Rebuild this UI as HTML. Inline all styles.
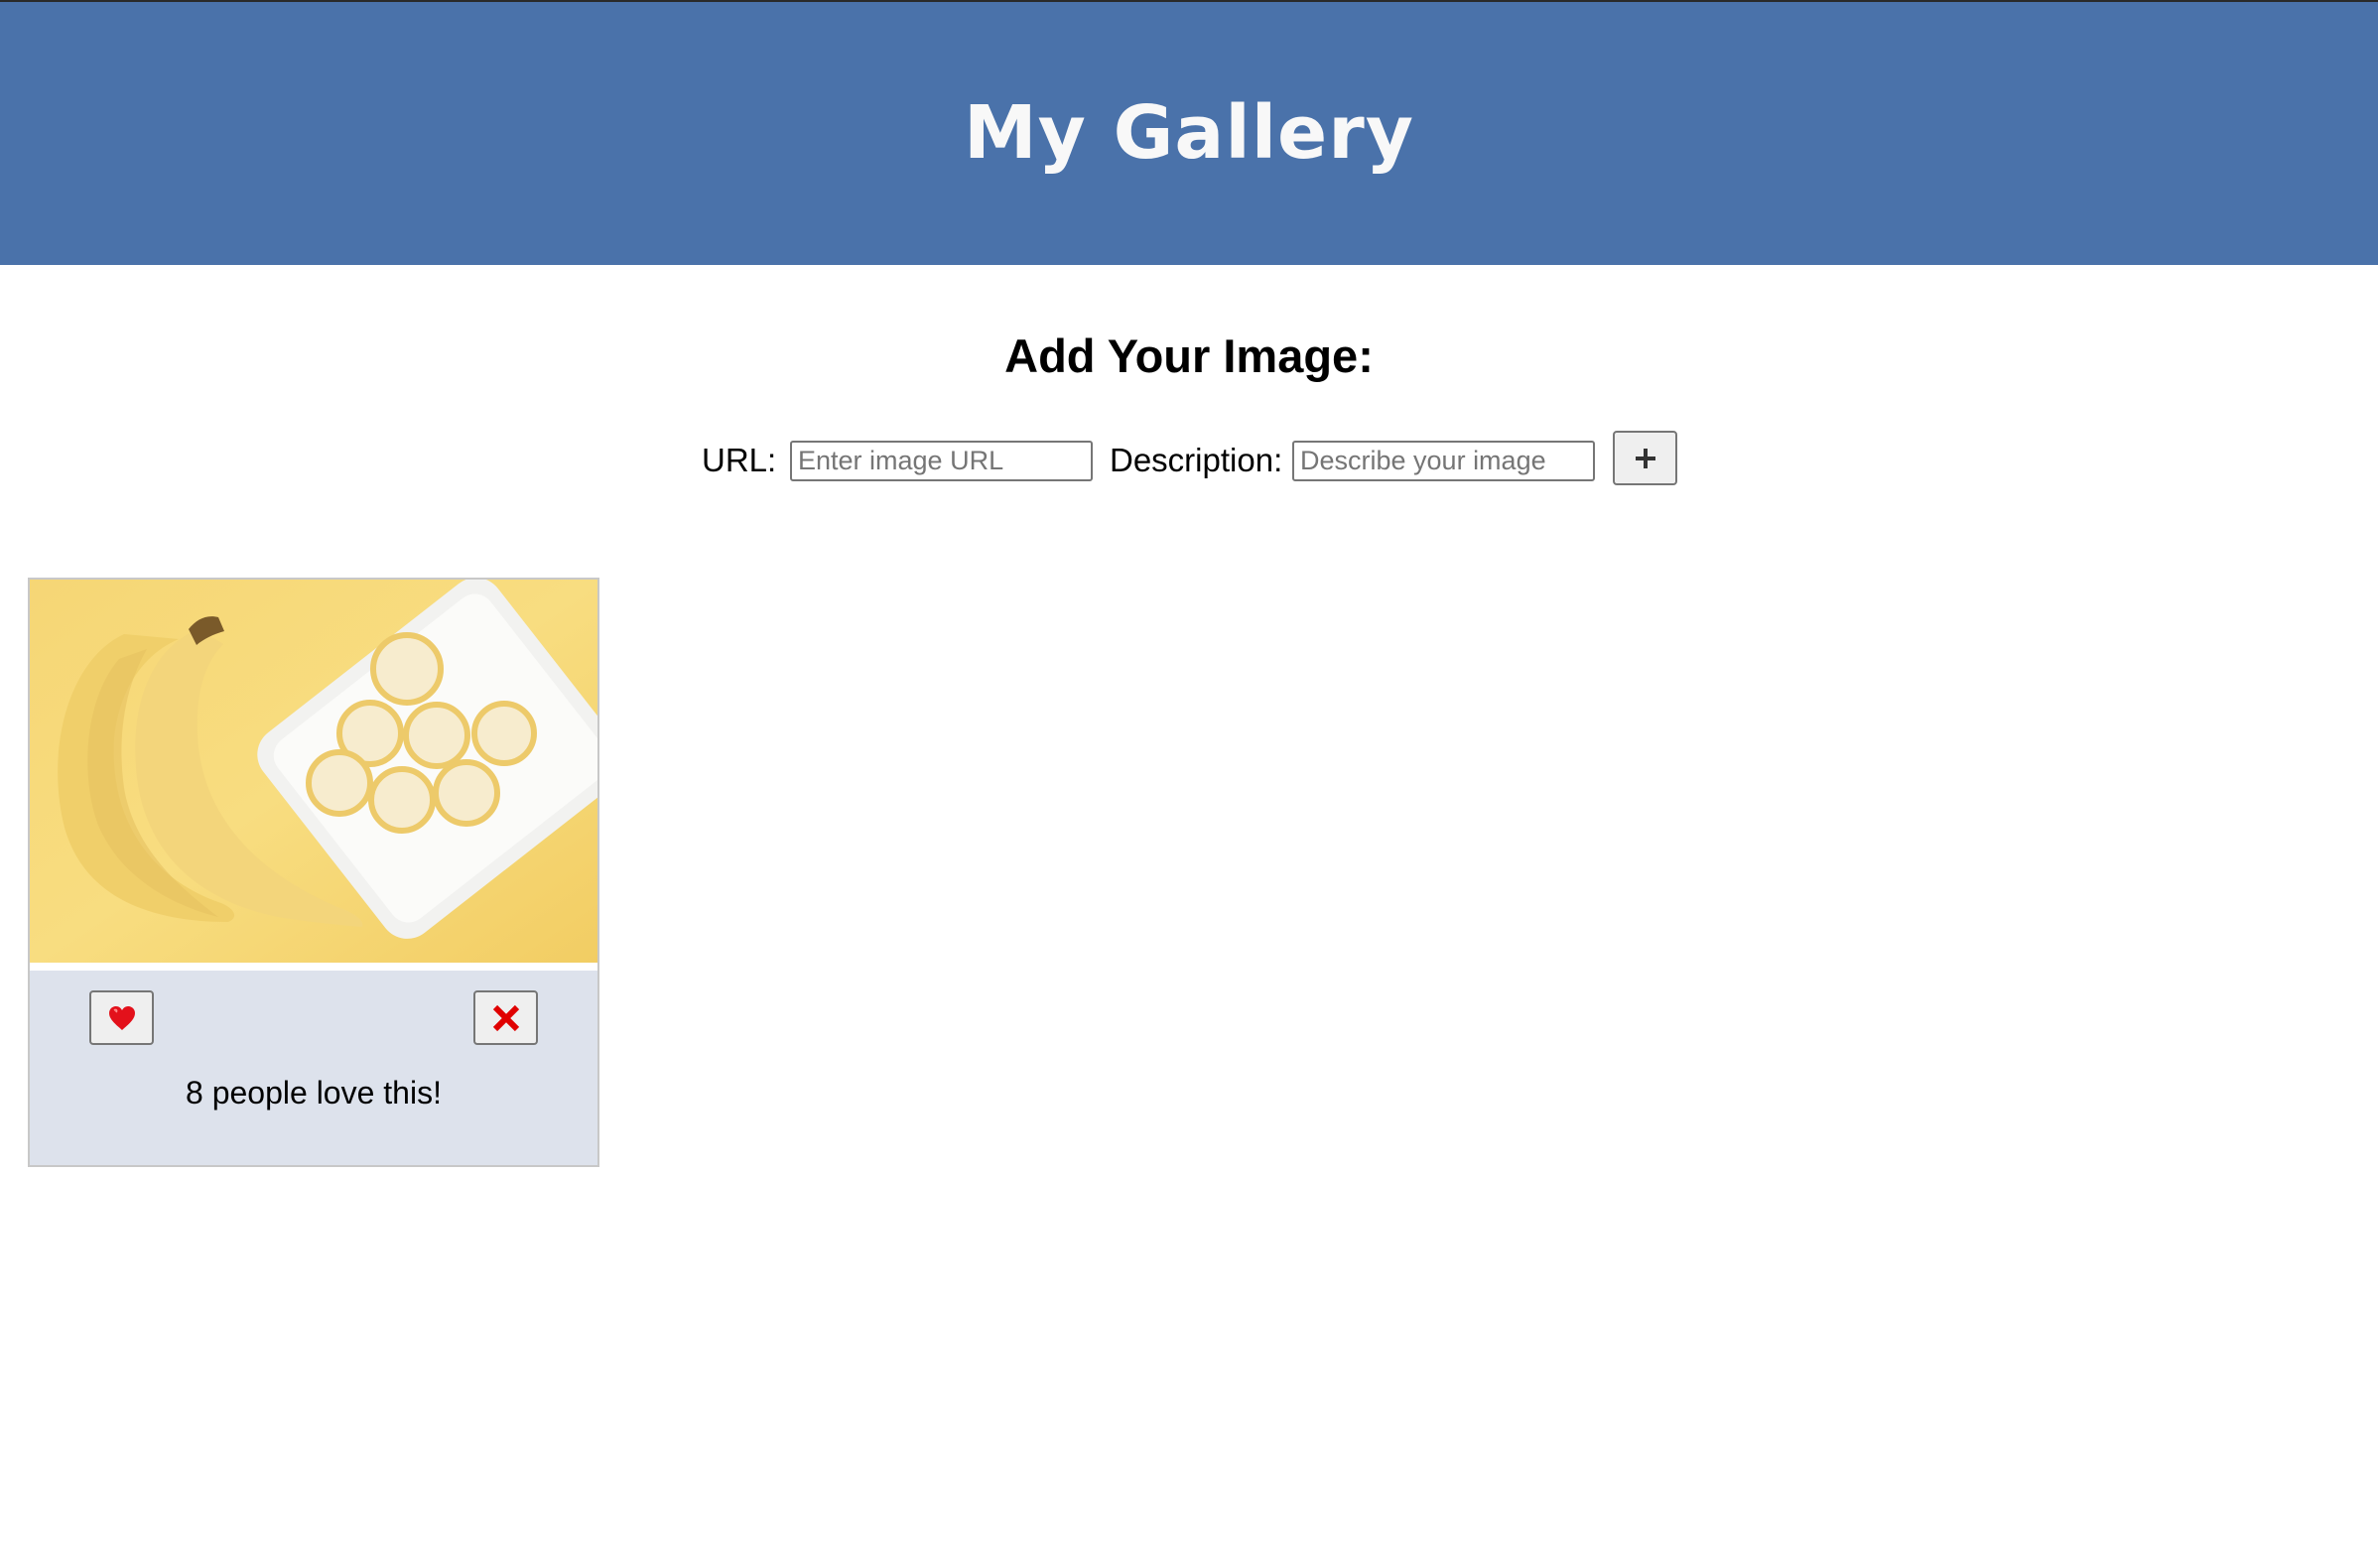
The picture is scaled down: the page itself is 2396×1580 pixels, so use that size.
<!DOCTYPE html>
<html><head><meta charset="utf-8"><style>
*{box-sizing:border-box;margin:0;padding:0}
body{width:2396px;height:1580px;background:#fff;font-family:"Liberation Sans",Arial,sans-serif;position:relative;overflow:hidden}
.top{position:absolute;left:0;top:0;width:2396px;height:2px;background:#2a2a2a}
header{position:absolute;left:0;top:2px;width:2396px;height:265px;background:#4a72aa}
header h1{position:absolute;left:0;width:2396px;top:88px;text-align:center;font-family:"DejaVu Sans",sans-serif;font-weight:bold;font-size:74px;color:#f8f8f8;line-height:1.2;letter-spacing:1px}
h2{position:absolute;left:0;width:2396px;top:331px;text-align:center;font-size:47px;font-weight:bold;line-height:1.2}
.lbl{position:absolute;font-size:33px;top:444px;line-height:40px}
.inp{position:absolute;top:444px;height:41px;width:305px;border:2px solid #767676;border-radius:3px;font-size:27px;color:#757575;padding-left:6px;line-height:37px;background:#fff}
.btn{position:absolute;background:#efefef;border:2px solid #767676;border-radius:4px;display:flex;align-items:center;justify-content:center}
.card{position:absolute;left:28px;top:582px;width:576px;height:594px;border:2px solid #c8c8c8;background:#dde2ec}
.img{position:absolute;left:0;top:0;width:572px;height:386px;background:#f5d672;overflow:hidden}
.strip{position:absolute;left:0;top:386px;width:572px;height:8px;background:#fff}
</style></head><body>
<div class="top"></div>
<header><h1>My Gallery</h1></header>
<h2>Add Your Image:</h2>
<div class="lbl" style="left:707px">URL:</div>
<div class="inp" style="left:796px">Enter image URL</div>
<div class="lbl" style="left:1118px">Description:</div>
<div class="inp" style="left:1302px">Describe your image</div>
<div class="btn" style="left:1625px;top:434px;width:65px;height:55px"><svg width="22" height="22" viewBox="0 0 22 22"><path d="M11 1V21M1 11H21" stroke="#333" stroke-width="4"/></svg></div>
<div class="card">
 <div class="img"><svg width="572" height="386" viewBox="0 0 572 386">
  <defs><linearGradient id="bg" x1="0" y1="0" x2="1" y2="1"><stop offset="0" stop-color="#f6d675"/><stop offset=".5" stop-color="#f8dd80"/><stop offset="1" stop-color="#f2cd63"/></linearGradient></defs>
  <rect width="572" height="386" fill="url(#bg)"/>
  <path d="M95 55 C40 80 15 170 35 250 C55 320 120 345 200 345 C212 340 205 330 190 325 C120 300 80 240 85 160 C90 110 115 75 150 60 Z" fill="#f0cf6a"/>
  <path d="M170 50 C120 70 100 130 108 200 C118 280 175 325 250 340 C280 345 310 348 335 350 C338 343 325 335 310 330 C240 300 180 250 170 170 C165 120 175 85 195 65 Z" fill="#f3d57b"/>
  <path d="M90 80 C55 120 50 200 70 250 C95 305 150 330 190 340 C150 310 105 270 95 210 C88 160 95 110 118 70 Z" fill="#e6c160" opacity=".6"/>
  <path d="M160 50 C168 40 178 35 190 38 L196 52 C185 55 175 60 168 66 Z" fill="#7a5a2a"/>
  <g transform="translate(415 180) rotate(-38)">
   <rect x="-150" y="-128" width="300" height="256" rx="28" fill="#f2f2f0"/>
   <rect x="-136" y="-114" width="272" height="228" rx="20" fill="#fbfbf9"/>
  </g>
  <g fill="#f7ecce" stroke="#edca6a" stroke-width="6">
   <circle cx="380" cy="90" r="34"/><circle cx="343" cy="155" r="31"/><circle cx="410" cy="157" r="31"/>
   <circle cx="478" cy="155" r="30"/><circle cx="312" cy="205" r="31"/><circle cx="375" cy="222" r="31"/><circle cx="440" cy="215" r="31"/>
  </g>
 </svg></div>
 <div class="strip"></div>
 <div class="btn" style="left:60px;top:414px;width:65px;height:55px"><svg width="28" height="26" viewBox="0 0 28 26"><path d="M14 25 C10 21 1 15 1 8 C1 3 5 1 8 1 C11 1 13 3 14 5 C15 3 17 1 20 1 C23 1 27 3 27 8 C27 15 18 21 14 25 Z" fill="#e3111b"/><path d="M6 5 C8 4 9 5 8 7" stroke="#ff8a8a" stroke-width="2" fill="none"/></svg></div>
 <div class="btn" style="left:447px;top:414px;width:65px;height:55px"><svg width="28" height="28" viewBox="0 0 28 28"><path d="M3 3L25 25M25 3L3 25" stroke="#e00000" stroke-width="6"/></svg></div>
 <div style="position:absolute;left:0;width:572px;top:499px;text-align:center;font-size:32px;line-height:36px">8 people love this!</div>
</div>
</body></html>
